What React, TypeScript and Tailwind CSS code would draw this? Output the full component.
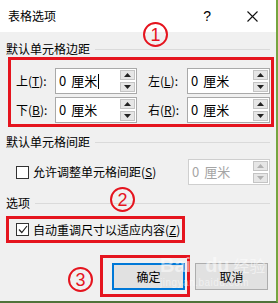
import React from "react";

const FONT = '"Noto Sans CJK SC", "Noto Sans", sans-serif';
const RED = "border-[#e5141e]";

function Spinner({ disabled }: { disabled?: boolean }) {
  const tri = disabled ? "#b0b0b0" : "#222";
  return (
    <div className="flex flex-col gap-[2px] w-[16px] py-[1px] pr-[1px]">
      <div className="flex-1 flex items-center justify-center bg-[#e6e6e6] border border-[#c4c4c4]">
        <svg width="7" height="4" viewBox="0 0 7 4"><path d="M0 4 L3.5 0 L7 4 Z" fill={tri} /></svg>
      </div>
      <div className="flex-1 flex items-center justify-center bg-[#e6e6e6] border border-[#c4c4c4]">
        <svg width="7" height="4" viewBox="0 0 7 4"><path d="M0 0 L3.5 4 L7 0 Z" fill={tri} /></svg>
      </div>
    </div>
  );
}

function NumInput({ w, cursor, disabled }: { w: string; cursor?: boolean; disabled?: boolean }) {
  return (
    <div
      className={`${w} h-[26px] flex bg-white border ${disabled ? "border-[#cfcfcf]" : "border-[#a9a9a9]"}`}
    >
      <div className={`flex-1 flex items-center pl-[3px] text-[13px] ${disabled ? "text-[#a5a5a5]" : "text-black"}`}>
        <span>0</span>
        <span className="ml-[5px]">厘米</span>
        {cursor && <span className="w-px h-[15px] bg-black ml-[1px]" />}
      </div>
      <Spinner disabled={disabled} />
    </div>
  );
}

function Label({ main, key2 }: { main: string; key2: string }) {
  return (
    <div className="w-[39px] text-[12px] text-black whitespace-nowrap">
      {main}(<span className="underline">{key2}</span>):
    </div>
  );
}

function Heading({ text }: { text: string }) {
  return (
    <div className="flex items-center h-4 pl-[6px] pr-[6px]">
      <span className="text-[12px] text-black leading-4 whitespace-nowrap">{text}</span>
      <div className="flex-1 h-px bg-[#dadada] ml-[5px]" />
    </div>
  );
}

function Checkbox({ checked }: { checked?: boolean }) {
  return (
    <div className="w-[13px] h-[13px] bg-white border border-[#333] flex items-center justify-center shrink-0">
      {checked && (
        <svg width="10" height="9" viewBox="0 0 10 9">
          <path d="M1 4.5 L3.8 7.5 L9 1" fill="none" stroke="#222" strokeWidth="1.2" />
        </svg>
      )}
    </div>
  );
}

function Circle({ n, className }: { n: string; className: string }) {
  return (
    <div
      className={`absolute w-[25px] h-[25px] rounded-full border-[2px] border-[#e5141e] text-[#e5141e] flex items-center justify-center text-[18px] leading-none ${className}`}
      style={{ fontFamily: '"Liberation Sans", sans-serif' }}
    >
      {n}
    </div>
  );
}

export default function App() {
  return (
    <div
      className="relative w-[278px] h-[303px] flex flex-col border-r-2 border-b-2 border-r-[#76a540] border-b-[#51733a] overflow-hidden"
      style={{ fontFamily: FONT }}
    >
      <div className="h-[32px] bg-white flex items-center shrink-0">
        <span className="pl-[8px] text-[12px] text-black">表格选项</span>
        <span className="ml-auto text-[14px] text-black" style={{ fontFamily: '"Liberation Sans", sans-serif' }}>?</span>
        <div className="ml-[36px] mr-[18px] flex items-center">
          <svg width="11" height="11" viewBox="0 0 11 11">
            <path d="M0.5 0.5 L10.5 10.5 M10.5 0.5 L0.5 10.5" stroke="#111" strokeWidth="1.1" />
          </svg>
        </div>
      </div>

      <div className="flex-1 bg-[#f0f0f0] flex flex-col pt-[9px]">
        <Heading text="默认单元格边距" />

        <div className={`ml-[8px] w-[266px] border-[3px] ${RED} pl-[5px] pt-[8px] pb-[1px] flex flex-col gap-[3px]`}>
          <div className="flex items-center">
            <Label main="上" key2="T" />
            <NumInput w="w-[82px]" cursor />
            <div className="ml-[11px]" />
            <Label main="左" key2="L" />
            <NumInput w="w-[83px]" />
          </div>
          <div className="flex items-center">
            <Label main="下" key2="B" />
            <NumInput w="w-[82px]" />
            <div className="ml-[11px]" />
            <Label main="右" key2="R" />
            <NumInput w="w-[83px]" />
          </div>
        </div>

        <div className="mt-[7px]">
          <Heading text="默认单元格间距" />
        </div>

        <div className="mt-[9px] flex items-center pl-[16px] pr-[6px] h-[26px]">
          <Checkbox />
          <span className="ml-[4px] text-[12px] text-black whitespace-nowrap">
            允许调整单元格间距(<span className="underline">S</span>)
          </span>
          <div className="ml-auto">
            <NumInput w="w-[82px]" disabled />
          </div>
        </div>

        <div className="mt-[10px]">
          <Heading text="选项" />
        </div>

        <div className={`mt-[5px] ml-[6px] w-[179px] h-[27px] border-[3px] ${RED} flex items-center pl-[7px]`}>
          <Checkbox checked />
          <span className="ml-[4px] text-[12px] text-black whitespace-nowrap">
            自动重调尺寸以适应内容(<span className="underline">Z</span>)
          </span>
        </div>

        <div className="mt-[12px] flex items-start pl-[100px]">
          <div className={`w-[90px] h-[42px] border-[3px] ${RED} pl-[9px] pt-[5px]`}>
            <div className="w-[73px] h-[27px] border-2 border-[#0078d7] bg-[#e1e1e1] flex items-center justify-center text-[12px] text-black">
              确定
            </div>
          </div>
          <div className="ml-[5px] mt-[8px] w-[73px] h-[27px] border border-[#adadad] bg-[#e1e1e1] flex items-center justify-center text-[12px] text-black">
            取消
          </div>
        </div>
      </div>

      <Circle n="1" className="left-[143px] top-[22px]" />
      <Circle n="2" className="left-[110px] top-[187px]" />
      <Circle n="3" className="left-[68px] top-[267px]" />

      <div className="absolute left-[160px] top-[255px] text-white/50 leading-none pointer-events-none">
        <div className="text-[20px] font-bold" style={{ fontFamily: '"Liberation Sans", sans-serif' }}>
          Bai<span className="ml-[14px]">du</span>
          <span className="text-[16px] font-normal ml-[4px]" style={{ fontFamily: FONT }}>经验</span>
        </div>
        <div className="text-[10px] mt-[3px] tracking-[0.5px]" style={{ fontFamily: '"Liberation Sans", sans-serif' }}>
          jingyan.baidu.com
        </div>
      </div>
    </div>
  );
}
